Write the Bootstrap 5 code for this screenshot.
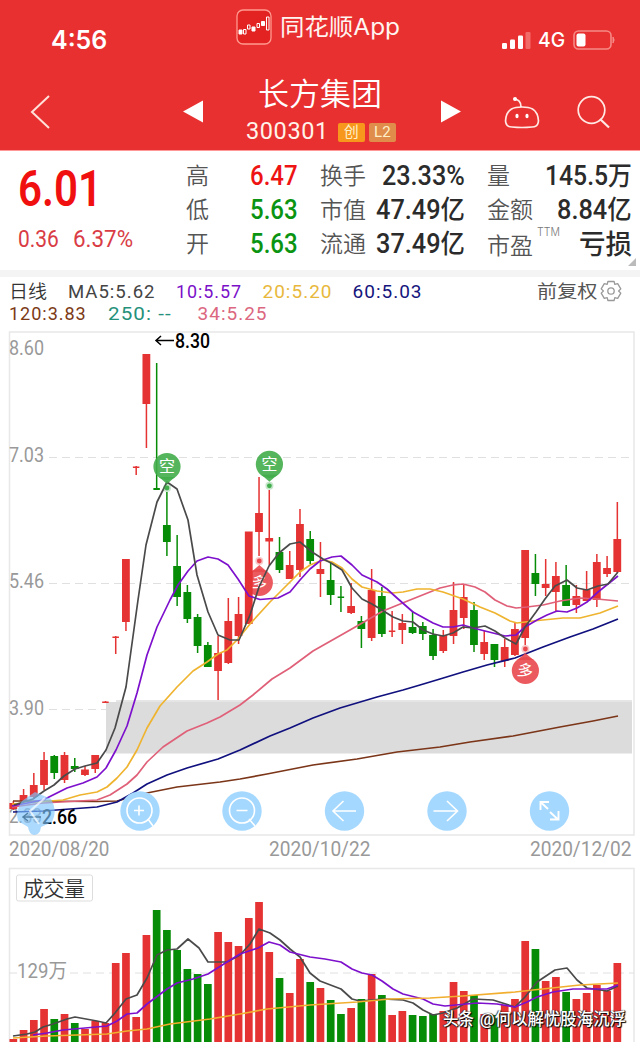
<!DOCTYPE html>
<html lang="zh-CN">
<head>
<meta charset="utf-8">
<meta name="viewport" content="width=device-width, initial-scale=1">
<title>长方集团 300301</title>
<link href="https://cdn.jsdelivr.net/npm/bootstrap@5.3.0/dist/css/bootstrap.min.css" rel="stylesheet">
<style>
body{font-family:Inter,"Noto Sans CJK SC",sans-serif;color:#333;background:#fff;overflow:hidden;line-height:1}
.screen{width:640px;height:1042px;overflow:hidden}
.top-bar{background:#e93030;height:151px;color:#fff;border-bottom:1px solid #f99}
.status-row{height:76px}
.clock{font-size:25px;font-weight:600;margin:28px 0 0 51px;width:185px}
.brand{font-size:23px;margin-top:9px;width:265px;height:36px;color:#fff5f0}
.signal{margin-top:30px;gap:7px;font-size:20px;font-weight:500;height:20px}
.nav-row{height:74px}
.stock-name{font-size:31px;font-weight:350;height:36px;line-height:36px}
.stock-code{font-family:Roboto,"Noto Sans CJK SC",sans-serif;font-size:23.5px;letter-spacing:.6px;height:22px;margin-top:9px;color:#fff3ea}
.tag{width:27px;height:19px;border-radius:2px;font-size:15px;letter-spacing:0;background:#f7981d;color:#fff0c8}
.tag-l2{background:#e08c4a}
.fit{display:inline-block;transform-origin:left center;white-space:nowrap}
.din{font-family:Roboto,"Noto Sans CJK SC",sans-serif}
.quotes{height:119px;padding:8px 7px 0 18px}
.quote-grid{display:grid;grid-template-columns:168px 112px 145px 145px;column-gap:0;height:102px}
.q-col:nth-child(3){margin-left:22px;width:145px}
.q-col:nth-child(4){margin-left:44px;width:145px}
.q-row{height:34px;font-size:23px;font-weight:350;color:#555}
.q-val{font-size:27px;font-weight:500;color:#2b2b2b}
.q-val .han{font-size:26px;font-weight:500}
.price{font-size:50px;font-weight:600;color:#f01010;margin-top:5px}
.chg{font-size:23.5px;color:#d93c45;margin-top:14px;height:24px}
.up{color:#ee1414}.down{color:#0b9412}
.legend{height:53px;padding:3px 0 0 9px;font-size:18.5px;font-weight:400}
.legend .line{height:22px;position:relative}
.legend .ma{font-family:Roboto,sans-serif;font-size:19px;letter-spacing:1px}
.dates{height:30px;padding:3px 9px 0 9px;font-size:20px;color:#999}
svg{display:block}
svg text{font-family:Roboto,"Noto Sans CJK SC",sans-serif}
.ttm{font-size:11px;color:#777}
</style>
</head>
<body>
<main class="screen">
<header class="top-bar">
  <div class="status-row d-flex align-items-start">
    <div class="clock"><span class="fit" data-w="56">4:56</span></div>
    <div class="brand d-flex align-items-center">
      <svg width="36" height="36" viewBox="0 0 36 36" fill="none" stroke="#fff" stroke-width="1">
        <rect x="1" y="1" width="34" height="34" rx="6" stroke="#ff9a90" stroke-width="1.300" fill="#e32222"/>
        <path d="M3 21h3v4H3z" fill="#fff"/><path d="M7.500 20.500h2.500v4.500H7.500zM11.500 16h2.500v4H11.500zM21 14.500h2.500v4H21zM30.500 8h2.500v13H30.500z"/><path d="M16 18h3v4h-3zM25.500 12.500h3v4h-3z" fill="#fff"/>
      </svg><span class="fit ms-2" data-w="120">同花顺App</span>
    </div>
    <div class="signal d-flex align-items-center">
      <svg width="30" height="18" viewBox="0 0 30 18" fill="#fff"><rect x="1" y="12" width="5" height="6" rx="1.200"/><rect x="9" y="8.500" width="5" height="9.500" rx="1.200"/><rect x="17" y="4.500" width="5" height="13.500" rx="1.200"/><rect x="24.500" y="1" width="5" height="17" rx="1.200" fill="#f16b68"/></svg>
      <span class="fit" data-w="27">4G</span>
      <svg width="44" height="20" viewBox="0 0 44 20"><rect x="2" y="1" width="37" height="18" rx="4.500" fill="none" stroke="#f58a86" stroke-width="1.600"/><rect x="4.500" y="3.500" width="9" height="13" rx="2" fill="#fff"/><path d="M41 7q2.300 3 0 6z" fill="#f58a86" stroke="#f58a86"/></svg>
    </div>
  </div>
  <nav class="nav-row d-flex align-items-start">
    <svg width="240" height="74" viewBox="0 0 240 74" fill="none"><path d="M49 20 32 36 49 52" stroke="#ffe1da" stroke-width="2"/><path d="M183 35.500 203 24.500V46.500z" fill="#fff"/></svg>
    <div class="text-center" style="width:160px">
      <div class="stock-name"><span class="fit" data-w="124">长方集团</span></div>
      <div class="stock-code d-flex align-items-center ps-1"><span class="fit ms-1" data-w="83" data-gap="2">300301</span><span class="tag d-inline-flex align-items-center justify-content-center" style="margin-left:9px">创</span><span class="tag tag-l2 ms-1 d-inline-flex align-items-center justify-content-center">L2</span></div>
    </div>
    <svg width="240" height="74" viewBox="400 76 240 74" fill="none" stroke="#ffe9e4" stroke-width="1.700"><path d="M461 111.500 441 100.500V122.500z" fill="#fff" stroke="none"/><path d="M515 99c3 1 6 2 6 8M522 107c10 0 13 3 15 7 2 5 3 13-5 13q-10 1-20 0c-8 0-7-8-5-13 2-4 5-7 15-7z"/><circle cx="515" cy="99" r="2" fill="#fff" stroke="none"/><ellipse cx="517" cy="116" rx="1.600" ry="2.200" fill="#fff" stroke="none"/><ellipse cx="527" cy="116" rx="1.600" ry="2.200" fill="#fff" stroke="none"/><circle cx="591.500" cy="110" r="13.300"/><path d="M600 119l9 8.500" stroke-width="2.200"/></svg>
  </nav>
</header>

<section class="quotes position-relative">
  <div class="quote-grid">
    <div class="din">
      <div class="price"><span class="fit" data-w="84">6.01</span></div>
      <div class="chg d-flex"><span class="fit" data-w="41">0.36</span><span style="width:14px"></span><span class="fit" data-w="60">6.37%</span></div>
    </div>
    <div class="q-col">
      <div class="q-row d-flex justify-content-between align-items-center"><span>高</span><span class="q-val din fit up" data-w="48">6.47</span></div>
      <div class="q-row d-flex justify-content-between align-items-center"><span>低</span><span class="q-val din fit down" data-w="48">5.63</span></div>
      <div class="q-row d-flex justify-content-between align-items-center"><span>开</span><span class="q-val din fit down" data-w="48">5.63</span></div>
    </div>
    <div class="q-col">
      <div class="q-row d-flex justify-content-between align-items-center"><span>换手</span><span class="q-val din fit" data-w="83">23.33%</span></div>
      <div class="q-row d-flex justify-content-between align-items-center"><span>市值</span><span class="q-val din fit" data-w="89">47.49<span class="han">亿</span></span></div>
      <div class="q-row d-flex justify-content-between align-items-center"><span>流通</span><span class="q-val din fit" data-w="89">37.49<span class="han">亿</span></span></div>
    </div>
    <div class="q-col">
      <div class="q-row d-flex justify-content-between align-items-center"><span>量</span><span class="q-val din fit" data-w="87">145.5<span class="han">万</span></span></div>
      <div class="q-row d-flex justify-content-between align-items-center"><span>金额</span><span class="q-val din fit" data-w="75">8.84<span class="han">亿</span></span></div>
      <div class="q-row d-flex align-items-center"><span class="pt-1">市盈</span><span class="ttm align-self-start ms-1"><span class="fit" data-w="23">TTM</span></span><span class="q-val ms-auto fit" data-w="53">亏损</span></div>
    </div>
  </div>
  <svg class="position-absolute bottom-0 end-0 me-1 mb-1" width="8" height="8"><path d="M8 0V8H0z" fill="#bbb"/></svg>
</section>
<div style="height:7px;background:#f4f4f4"></div>

<section class="legend">
  <div class="line d-flex align-items-center">
    <span class="fit" data-w="38" style="font-weight:350">日线</span><span class="fit ma" data-w="87" data-gap="21" style="color:#444">MA5:5.62</span>
    <span class="fit ma" data-w="66" data-gap="20" style="color:#7a10c8">10:5.57</span><span class="fit ma" data-w="70" data-gap="21" style="color:#e8b83c">20:5.20</span>
    <span class="fit ma" data-w="70" data-gap="20" style="color:#15157d">60:5.03</span>
    <span class="fit" data-w="61" data-gap="114" style="color:#555">前复权</span>
    <svg width="22" height="22" style="margin-left:3px" viewBox="-11 -11 22 22" fill="none" stroke="#999" stroke-width="1.300" stroke-linejoin="round"><path d="M-3.100-9.500H3.100L3.800-6.600 6.700-7.400 9.800-2.100 7.600 0 9.800 2.100 6.700 7.400 3.800 6.600 3.100 9.500H-3.100L-3.800 6.600-6.700 7.400-9.800 2.100-7.600 0-9.800-2.100-6.700-7.400-3.800-6.600z"/><circle r="3.200"/></svg>
  </div>
  <div class="line d-flex align-items-center">
    <span class="fit ma" data-w="78" style="color:#7c3a16">120:3.83</span><span class="fit ma" data-w="64" data-gap="21" style="color:#26917a">250: --</span><span class="fit ma" data-w="70" data-gap="26" style="color:#db6780">34:5.25</span>
  </div>
</section>

<svg id="kline" width="640" height="506" viewBox="0 330 640 506">
  <g stroke="#e8e8e8" stroke-width="1.500" fill="none"><path d="M9.500 836V332H634V835H9.500"/></g>
  <g stroke="#e0e0e0" stroke-dasharray="8 5"><path d="M49 457.500H634M49 583.500H634M49 709.500H106"/></g>
  <path d="M106 702H632V753.500H106z" fill="#dcdcdc"/><path d="M116 701H632" stroke="#ccc"/>
  <g font-size="20" fill="#999">
    <text x="9" y="354.500" textLength="35" lengthAdjust="spacingAndGlyphs">8.60</text><text x="9" y="462" textLength="35" lengthAdjust="spacingAndGlyphs">7.03</text>
    <text x="9" y="588" textLength="35" lengthAdjust="spacingAndGlyphs">5.46</text><text x="9" y="715" textLength="35" lengthAdjust="spacingAndGlyphs">3.90</text>
    <text x="9" y="823" textLength="33" lengthAdjust="spacingAndGlyphs">2.33</text>
  </g>
  <g id="pins-back"></g>
  <g id="candles"></g>
  <g id="lines" fill="none" stroke-width="1.700" stroke-linejoin="round"></g>
  <g id="pins"></g>
  <g font-size="19.500" font-weight="500" fill="#000">
    <text x="175" y="347.500" textLength="35" lengthAdjust="spacingAndGlyphs">8.30</text>
    <text x="42" y="824" textLength="35" lengthAdjust="spacingAndGlyphs">2.66</text>
    <path d="M174 340.500H156M161 336 156 340.500 161 345M41 817H23M28 813 23 817 28 821" fill="none" stroke="#000" stroke-width="1.500"/>
  </g>
  <path d="M35 792 51 799Q58 811 52 822L41 827Q40 835 34 835 29 834 28 827L18 821Q15 811 22 801z" fill="#7fc6ff" fill-opacity=".65"/>
  <path d="M45 798 30 811 39 824" fill="none" stroke="#fff" stroke-opacity=".7" stroke-width="2"/>
  <g fill="#a5d8ff"><circle cx="140" cy="811" r="19.700"/><circle cx="242" cy="811" r="19.700"/><circle cx="344.500" cy="811" r="19.700"/><circle cx="447" cy="811" r="19.700"/><circle cx="549.500" cy="811" r="19.700"/></g>
  <g fill="none" stroke="#fff" stroke-width="1.600">
    <circle cx="139.500" cy="810.500" r="12.500"/><path d="M148 819l5 7M134 810.500h10M139 805.500v10"/>
    <circle cx="242" cy="810.500" r="12.500"/><path d="M249 819l6 7M236.500 810.500h11M356 811H333M343.500 801 333 811 343.500 821M433.500 811H457M447 801 457.500 811 447 821"/>
    <path d="M548 809 540.500 802M540.500 810V802H549M550 812 558 819.500M550 819.500H558.500V811" stroke-width="1.900"/>
  </g>
</svg>

<div class="dates d-flex justify-content-between din">
  <span class="fit" data-w="100">2020/08/20</span><span class="fit" data-w="101">2020/10/22</span><span class="fit" data-w="101">2020/12/02</span>
</div>

<svg id="volume" width="640" height="176" viewBox="0 866 640 176">
  <path d="M9.500 1042V868.500H634V1042" stroke="#e8e8e8" stroke-width="1.500" fill="none"/>
  <path d="M9 973H17M70 973H634" stroke="#e0e0e0" stroke-dasharray="8 5"/>
  <rect x="16.500" y="875" width="76" height="26" rx="2" fill="#fff" stroke="#ddd"/>
  <text x="23" y="895.500" font-size="21" textLength="62" font-weight="350" fill="#333">成交量</text>
  <text x="17" y="978" font-size="20" fill="#999" textLength="50" lengthAdjust="spacingAndGlyphs">129万</text>
  <g id="bars"></g>
  <g id="vlines" fill="none" stroke-width="1.700" stroke-linejoin="round"></g>
  <g fill="#fff" font-size="17" font-weight="500" style="text-shadow:1px 1px 1px #000,-1px 0 1px #333,1px 0 1px #222"><text x="443" y="1025" textLength="31" lengthAdjust="spacingAndGlyphs">头条</text><text x="480" y="1025" textLength="146" lengthAdjust="spacingAndGlyphs">@何以解忧股海沉浮</text></g>
</svg>
</main>
<script src="https://cdn.jsdelivr.net/npm/bootstrap@5.3.0/dist/js/bootstrap.bundle.min.js"></script>
<script>
// Condense each label to its design width and shrink its layout box to match.
document.querySelectorAll('.fit').forEach(e=>{
  const n=e.offsetWidth,w=+e.dataset.w;
  e.style.transform=`scaleX(${w/n})`;e.style.marginRight=(w-n)+'px';
  if(e.dataset.gap)e.style.setProperty('margin-left',e.dataset.gap+'px','important');
});
const RED='#e53232',GREEN='#078c07',X=i=>13.3+10.237*i;
// colour, high, body top, body bottom, low
const k=`r 801 803 809 810|r 789 795 801 803|r 773 785 797 799|r 752 760 785 790|g 755 756 773 779|r 752 755 780 783|g 758 766 769 772|r 766 769.5 775 776|r 755 755 769 773|t 701 701.5 703 703|t 636 636.500 638 654|r 559 559 622 631|t 466 466.500 468 475|r 354 354 404 448|h 363 488 490 490|g 492 525 542 556|g 535 566 597 606|g 585 592 619 623|g 614 617 646 653|g 642 645 667 667|r 636 653 671 700|r 598 621 663 664|r 597 614 636 644|r 532 531.500 624 624|r 477 513 532 556|r 490 538 541.500 565|g 537 552 570 573|r 551 565 579 579|r 509 524 570 577|g 531 539 561 564|r 542 569 574 597|g 563 580 595 605|h 586 596.500 598 612|r 583 606 613 614|g 616 621 629 648|r 569 590 638 641|g 587 596 634 637|t 611 630.500 632 637|r 614 623 630 644|g 611 627 633 634|g 622 626 634 640|g 629 635 656 660|r 630 635 651 653|r 582 610 636 644|r 584 597 618 629|g 602 610 645 652|r 631 642 654 660|g 644 644 660 667|r 639 647 661 667|r 623 629 655 656|r 550 550 638 645|g 554 573 584 596|r 559 584 588 596|r 562 576 592 611|g 565 585 606 606|r 585 596 605 613|r 571 590 601 601|r 554 562 600 607|r 556 568 574 577|r 502 539 572 573`.split('|');
let s='';
k.forEach((d,i)=>{const[c,h,t,b,l]=d.split(' ').map((v,j)=>j?+v:v),f=(c=='g'||c=='h')?GREEN:RED,w=(c=='t'||c=='h')?6.5:7.8;
 s+=`<path d="M${X(i)-.7} ${h}h1.500V${l}h-1.500zM${X(i)-w/2} ${t}h${w}V${b}h-${w}z" fill="${f}"/>`});
document.getElementById('candles').innerHTML=s;
const vols='1039 1030 1020 1009 -1019 1014 -1023 1029 1021 1023 963 953 1017 935 -910 -930 -950 -969 -974 -984 932 942 946 918 902 952 -978 993 959 -982 988 -1000 -1014 1008 -999 974 -995 1015 1011 -1015 -1016 -1014 1011 982 991 -995 1014 -1015 1005 999 941 -949 981 977 -992 999 993 985 991 963'.split(' ');
document.getElementById('bars').innerHTML=vols.map((v,i)=>`<rect x="${X(i)-3.8}" y="${Math.abs(v)}" width="7.700" height="140" fill="${v<0?GREEN:RED}"/>`).join('');
const draw=(id,a)=>document.getElementById(id).innerHTML=a.map(([c,p])=>`<polyline stroke="${c}" points="${p}"/>`).join('');
draw('lines',[
['#7b3518','13,801 97,801.5 117,801 147,793 177,787 220,782 240,779 267,774 313,765 357,759 397,752 440,747 470,742 513,736 560,727 593,721 618,716'],
['#10107e','13,812 43,811 97,807 117,802 133,793 147,784 167,775 187,768 218,759 240,750 270,736 290,728 313,718 340,708 377,697 403,690 420,685 440,679 463,672 487,665 515,658 543,647 570,637 593,629 618,619'],
['#df6078','12,807 43,803 97,800 110,795 127,784 137,775 147,762 163,747 187,731 207,723 220,717 240,705 253,695 272,679 290,668 313,651 343,634 357,626 383,611 410,600 430,592 440,588 453,585 463,584 475,587 485,592 495,600 507,606 516,608 527,607 543,605 560,601 580,598 597,599 618,601'],
['#efb42f','12,804 63,800 80,795 97,792 107,787 117,778 127,767 137,750 147,728 160,706 177,687 193,671 207,662 218,654 227,650 238,639 250,624 270,602 287,585 300,572 310,565 323,560 332,562 342,568 352,579 362,587 377,591 392,593 403,592 417,589 430,589 443,592 463,599 480,607 495,613 510,621 517,623 533,621 563,618 580,618 600,613 618,606'],
['#7d10cc','12,806 43,800 67,788 83,783 97,777 106,768 116,750 127,726 137,693 147,655 157,627 170,600 178,585 188,571 197,561 208,557 218,559 228,565 238,579 249,596 260,599.5 278,598 290,592 300,580 310,569 320,561 332,557 341,556 352,565 362,575 377,582 387,589 397,598 413,612 433,623 443,627 453,627 463,625 473,628 485,631 497,634 505,636 516,635 525,627 537,620 547,615 557,611 567,612 577,608 587,602 598,592 608,584 618,576'],
['#4a4a4a','14,805 33,799 44,791 54,785 64,776 75,769 85,766 97,763 106,750 115,728 126,687 138,600 146,545 157,502 167,482 177,489 188,520 197,575 208,612 218,635 230,640 239,640 250,615 259,587 269,566 279,553 290,544 300,542 312,552 323,559 331,563 342,570 352,588 362,599 372,604 382,610 393,617 403,621 413,622 423,630 433,634 443,636 453,633 463,627 473,628 485,626 495,631 505,638 516,644 525,627 536,612 545,599 555,586 567,580 577,588 587,590 598,586 608,584 618,572']]);
draw('vlines',[
['#4a4a4a','13,1036 27,1034 35,1032 43,1027 53,1024 67,1019 75,1017 97,1021 106,1023 115,1013 126,999 137,995 147,978 157,955 167,950 177,949 188,939 199,948 208,962 227,962 240,955 250,944 259,929 270,933 280,940 290,949 300,957 310,973 320,981 341,989 352,999 360,1001 383,999 403,1000 413,1003 423,1010 433,1015 443,1013 457,1008 473,999 493,1000 515,1007 525,997 537,982 555,970 567,968 577,980 587,988 607,991 618,986'],
['#7d10cc','33,1035 47,1033 63,1030 107,1026 117,1021 127,1014 137,1013 147,1004 167,989 177,983 193,979 208,974 227,962 240,954 258,948 269,942 280,945 290,952 310,957 325,959 341,962 352,969 362,973 372,975 382,981 393,989 403,994 423,999 433,1004 445,1006 477,1003 497,1004 515,1007 527,1002 537,997 553,992 573,989 607,989 618,985'],
['#f2ae2e','13,1038 47,1036 107,1034 127,1031 147,1029 170,1024 210,1019 240,1014 267,1009 310,1005 357,1002 390,999 430,998 463,996 515,992 533,990 580,985 618,983']]);
// Long / short signal markers: x, centre y, direction of the tip, glyph
const pin=(x,y,d,t)=>{const c=d>0?'#42ad4b':'#e9484d';
 return `<g transform="translate(${x} ${y})"><circle r="13.600" fill="${c}" fill-opacity=".9"/><path d="M-8 ${d*10.500}L0 ${d*17.500} 8 ${d*10.500}z" fill="${c}" fill-opacity=".9"/><circle cy="${d*21.500}" r="4" fill="${c}" fill-opacity=".3"/><circle cy="${d*21.500}" r="2.400" fill="${c}"/><text y="5.800" font-size="16" text-anchor="middle" fill="#fff"${d<0?' transform="rotate(12)"':''}>${t}</text></g>`};
document.getElementById('pins').innerHTML=pin(167,466.5,1,'空')+pin(269.4,464.3,1,'空')+pin(525.4,670.5,-1,'多');
document.getElementById('pins-back').innerHTML=pin(259.300,582.5,-1,'多');
</script>
</body>
</html>
